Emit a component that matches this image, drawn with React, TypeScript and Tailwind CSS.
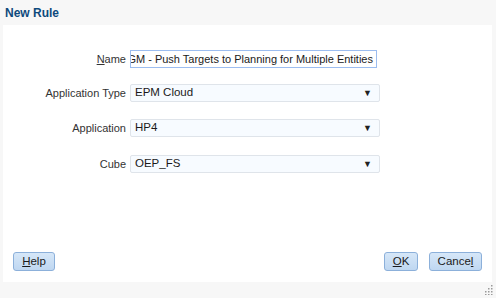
import { ReactNode } from "react";

function Field({ label, children }: { label: ReactNode; children: ReactNode }) {
  return (
    <div className="flex h-[18px] items-center">
      <div className="w-[123px] pr-[4px] text-right text-[11px] text-[#333]">{label}</div>
      {children}
    </div>
  );
}

function Select({ value }: { value: string }) {
  return (
    <div className="flex h-[18px] w-[250px] items-center justify-between rounded-[2px] border border-[#dfe4ea] bg-[#f7fbff] pl-[4px] pr-[7px] text-[11.5px] text-[#1a1a1a]">
      <span>{value}</span>
      <span className="text-[9px] leading-none text-[#222]">▼</span>
    </div>
  );
}

function Btn({ children, w }: { children: ReactNode; w: string }) {
  return (
    <button
      type="button"
      className={`flex h-[19px] ${w} items-center justify-center rounded-[3px] border border-[#8cb0da] bg-gradient-to-b from-[#d6e7f8] to-[#bfd7f1] text-[11.5px] text-[#1a1a1a]`}
    >
      {children}
    </button>
  );
}

export default function App() {
  return (
    <div
      className="relative flex h-[298px] w-[496px] flex-col bg-[#f7f7f7]"
      style={{ fontFamily: '"Liberation Sans", Arial, sans-serif' }}
    >
      <div className="flex h-[25px] items-center pl-[5px] text-[12px] font-bold text-[#0e4a7c]">New Rule</div>
      <div className="mx-[3px] flex h-[257px] w-[489px] flex-col bg-white">
        <div className="mt-[25px] flex flex-col gap-[16px] pl-[4px]">
          <Field
            label={
              <>
                <span className="underline">N</span>ame
              </>
            }
          >
            <div className="flex h-[18px] w-[247px] items-center justify-end overflow-hidden whitespace-nowrap border border-[#9cbdf0] bg-white pr-[3px] text-[11px] text-[#1a1a1a]">
              SGM - Push Targets to Planning for Multiple Entities
            </div>
          </Field>
          <Field label="Application Type">
            <Select value="EPM Cloud" />
          </Field>
          <div className="mt-[1px]">
            <Field label="Application">
              <Select value="HP4" />
            </Field>
          </div>
          <div className="mt-[2px]">
            <Field label="Cube">
              <Select value="OEP_FS" />
            </Field>
          </div>
        </div>
        <div className="mt-auto mb-[11px] flex items-center px-[10px]">
          <Btn w="w-[42px]">
            <span>
              <span className="underline">H</span>elp
            </span>
          </Btn>
          <div className="flex-1" />
          <Btn w="w-[34px]">
            <span>
              <span className="underline">O</span>K
            </span>
          </Btn>
          <div className="w-[11px]" />
          <Btn w="w-[53px]">
            <span>
              Cance<span className="underline">l</span>
            </span>
          </Btn>
        </div>
      </div>
      <svg className="absolute bottom-[3px] right-[3px]" width="10" height="10" viewBox="0 0 10 10">
        {[
          [8, 0],
          [8, 3],
          [5, 3],
          [8, 6],
          [5, 6],
          [2, 6],
          [8, 9],
          [5, 9],
          [2, 9],
        ].map(([x, y], i) => (
          <rect key={i} x={x} y={y} width="1.5" height="1.5" fill="#9a9a9a" />
        ))}
      </svg>
    </div>
  );
}
